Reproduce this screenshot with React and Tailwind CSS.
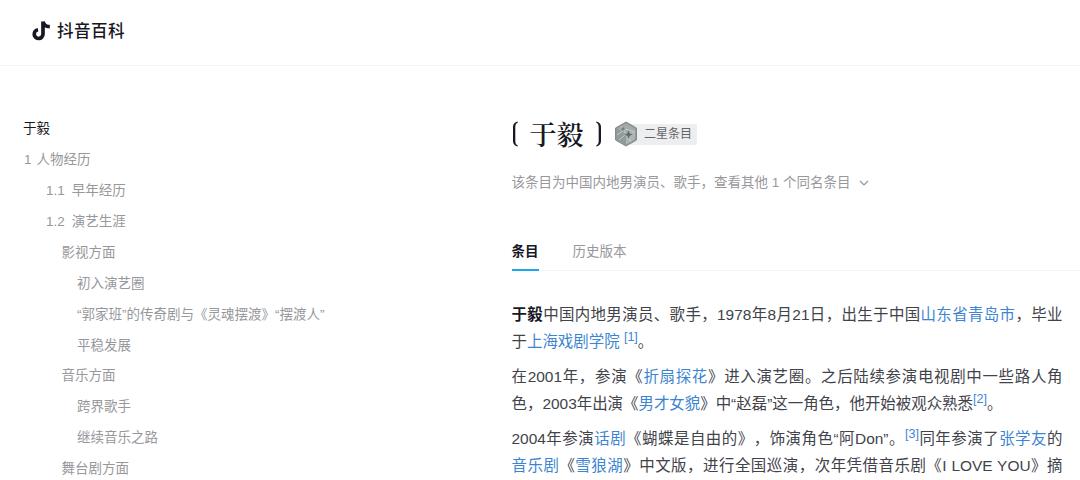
import React from 'react';

const tocItems = [
  { text: '于毅', indent: 'pl-[23px]', active: true },
  { num: '1', text: '人物经历', indent: 'pl-6', gap: 'gap-[5px]' },
  { num: '1.1', text: '早年经历', indent: 'pl-[46px]', gap: 'gap-[7px]' },
  { num: '1.2', text: '演艺生涯', indent: 'pl-[46px]', gap: 'gap-[7px]' },
  { text: '影视方面', indent: 'pl-[61.5px]' },
  { text: '初入演艺圈', indent: 'pl-[77px]' },
  { text: '“郭家班”的传奇剧与《灵魂摆渡》“摆渡人”', indent: 'pl-[77px]' },
  { text: '平稳发展', indent: 'pl-[77px]' },
  { text: '音乐方面', indent: 'pl-[61.5px]' },
  { text: '跨界歌手', indent: 'pl-[77px]' },
  { text: '继续音乐之路', indent: 'pl-[77px]' },
  { text: '舞台剧方面', indent: 'pl-[61.5px]' },
];

function Logo() {
  return (
    <div className="flex items-center gap-[6px] text-[#161823]">
      <svg width="19" height="20" viewBox="0 0 19 20" fill="none">
        <path
          d="M11 .5v12.600a4.400 4.400 0 1 1-5-4.350M11 .5c.6 3.300 3 5.100 6.800 5.200"
          stroke="currentColor"
          strokeWidth="3.700"
        />
      </svg>
      <span className="text-[16.500px] leading-5 font-medium tracking-[0.5px]">抖音百科</span>
    </div>
  );
}

function StarBadge() {
  return (
    <div className="flex items-center">
      <svg className="relative z-10" width="24" height="26" viewBox="0 0 24 26">
        <path d="M12 1l10.500 6v12L12 25 1.500 19V7z" fill="#8f9797" stroke="#858c8d" />
        <path d="M12 2.500l9 5.200L12 13 3 7.700z" fill="#a3abab" />
        <path d="M3 8l9 5v10.500L3 18.300z" fill="#929a9a" />
        <path d="M12 13l9-5v10.300l-9 5.200z" fill="#aeb5b5" />
        <path d="M3 14l9-6 9 3M7 5.500l5 7.500 5 8M12 13l-7 6" stroke="#c3c9c9" fill="none" />
        <path d="M14.500 9.500l1.200 2.900 2.900 1.200-2.900 1.200-1.200 2.900-1.200-2.900-2.900-1.200 2.900-1.200z" fill="#5f6768" />
        <path d="M9 5.500l.8 1.700 1.700.8-1.700.8L9 10.500l-.8-1.700L6.500 8l1.700-.8z" fill="#737b7c" />
      </svg>
      <span className="-ml-3 flex h-[21px] w-[71px] items-center rounded-r-xs bg-[#edeeef] pl-[18px] text-[12px] text-[#63656b]">
        二星条目
      </span>
    </div>
  );
}

function Link({ children }) {
  return <a className="text-[#3d85d1]">{children}</a>;
}

function Ref({ n }) {
  return <sup className="relative -top-[6px] align-baseline text-[12.500px] leading-none text-[#3d85d1]">[{n}]</sup>;
}

// Linha justificada na largura da coluna
function Line({ full, children }) {
  return (
    <div className={`h-[27px] whitespace-nowrap ${full ? '[text-align-last:justify]' : ''}`}>
      {children}
    </div>
  );
}

function App() {
  return (
    <div className="h-[480px] w-[1080px] overflow-hidden bg-white font-['Liberation_Sans','Noto_Sans_CJK_SC',sans-serif] [text-spacing-trim:space-all]">
      <header className="flex h-[66px] items-start border-b border-[#f5f5f6] pt-[21px] pl-[32px]">
        <Logo />
      </header>

      <div className="flex">
        {/* Sumário */}
        <nav className="w-[511.500px] shrink-0 pt-12 text-[13.500px] text-[#97989c]">
          {tocItems.map((item) => (
            <div
              key={item.text}
              className={`flex h-[30.900px] items-center whitespace-nowrap ${item.indent} ${item.gap || ''} ${item.active ? 'text-[#161823]' : ''}`}
            >
              {item.num && <span>{item.num}</span>}
              <span>{item.text}</span>
            </div>
          ))}
        </nav>

        <main className="flex-1 pt-[50px]">
          {/* Título */}
          <div className="flex h-9 items-center">
            <h1 className="flex items-center font-['Noto_Serif_CJK_SC','Noto_Sans_CJK_SC',serif] text-[27px] leading-9 font-semibold text-[#161823]">
              <svg width="7" height="26" viewBox="0 0 7 26" fill="currentColor">
                <path d="M5.800.5C2.500 1.300 1 3 1 6v14c0 3 1.500 4.700 4.800 5.500v-1C4 23.500 3.300 22.300 3.300 20V6c0-2.300.7-3.500 2.500-4.500z" />
              </svg>
              <span className="mx-[11px]">于毅</span>
              <svg width="7" height="26" viewBox="0 0 7 26" fill="currentColor">
                <path d="M1.200.5C4.500 1.300 6 3 6 6v14c0 3-1.500 4.700-4.800 5.500v-1C3 23.500 3.700 22.300 3.700 20V6c0-2.300-.7-3.500-2.500-4.500z" />
              </svg>
            </h1>
            <div className="ml-[12.500px]">
              <StarBadge />
            </div>
          </div>

          <div className="mt-[21px] flex h-5 items-center text-[13.500px] text-[#97989c]">
            <span className="whitespace-pre">该条目为中国内地男演员、歌手，查看其他 1 个同名条目</span>
            <svg className="ml-2" width="10" height="6" viewBox="0 0 10 6" fill="none">
              <path d="M1 1l4 4 4-4" stroke="currentColor" strokeWidth="1.200" />
            </svg>
          </div>

          {/* Abas */}
          <div className="mt-[46px] flex h-[32px] gap-[34px] border-b border-[#f3f3f4] text-[13.500px]">
            <div className="h-[32px] border-b-2 border-[#1ba6ee] pt-[3px] font-bold text-[#161823]">条目</div>
            <div className="pt-[3px] text-[#97989c]">历史版本</div>
          </div>

          <article className="mt-[30px] flex w-[551px] flex-col gap-2 text-[15.450px] leading-[27px] text-[#41434b]">
            <div>
              <Line full>
                <b className="text-[#161823]">于毅</b>中国内地男演员、歌手，1978年8月21日，出生于中国<Link>山东省青岛市</Link>，毕业
              </Line>
              <Line>
                于<Link>上海戏剧学院</Link> <Ref n={1} />。
              </Line>
            </div>
            <div>
              <Line full>
                在2001年，参演《<Link>折扇探花</Link>》进入演艺圈。之后陆续参演电视剧中一些路人角
              </Line>
              <Line>
                色，2003年出演《<Link>男才女貌</Link>》中“赵磊”这一角色，他开始被观众熟悉<Ref n={2} />。
              </Line>
            </div>
            <div>
              <Line full>
                2004年参演<Link>话剧</Link>《蝴蝶是自由的》，饰演角色“阿Don”。<Ref n={3} />同年参演了<Link>张学友</Link>的
              </Line>
              <Line full>
                <Link>音乐剧</Link>《<Link>雪狼湖</Link>》中文版，进行全国巡演，次年凭借音乐剧《I LOVE YOU》摘
              </Line>
            </div>
          </article>
        </main>
      </div>
    </div>
  );
}

export default App;
